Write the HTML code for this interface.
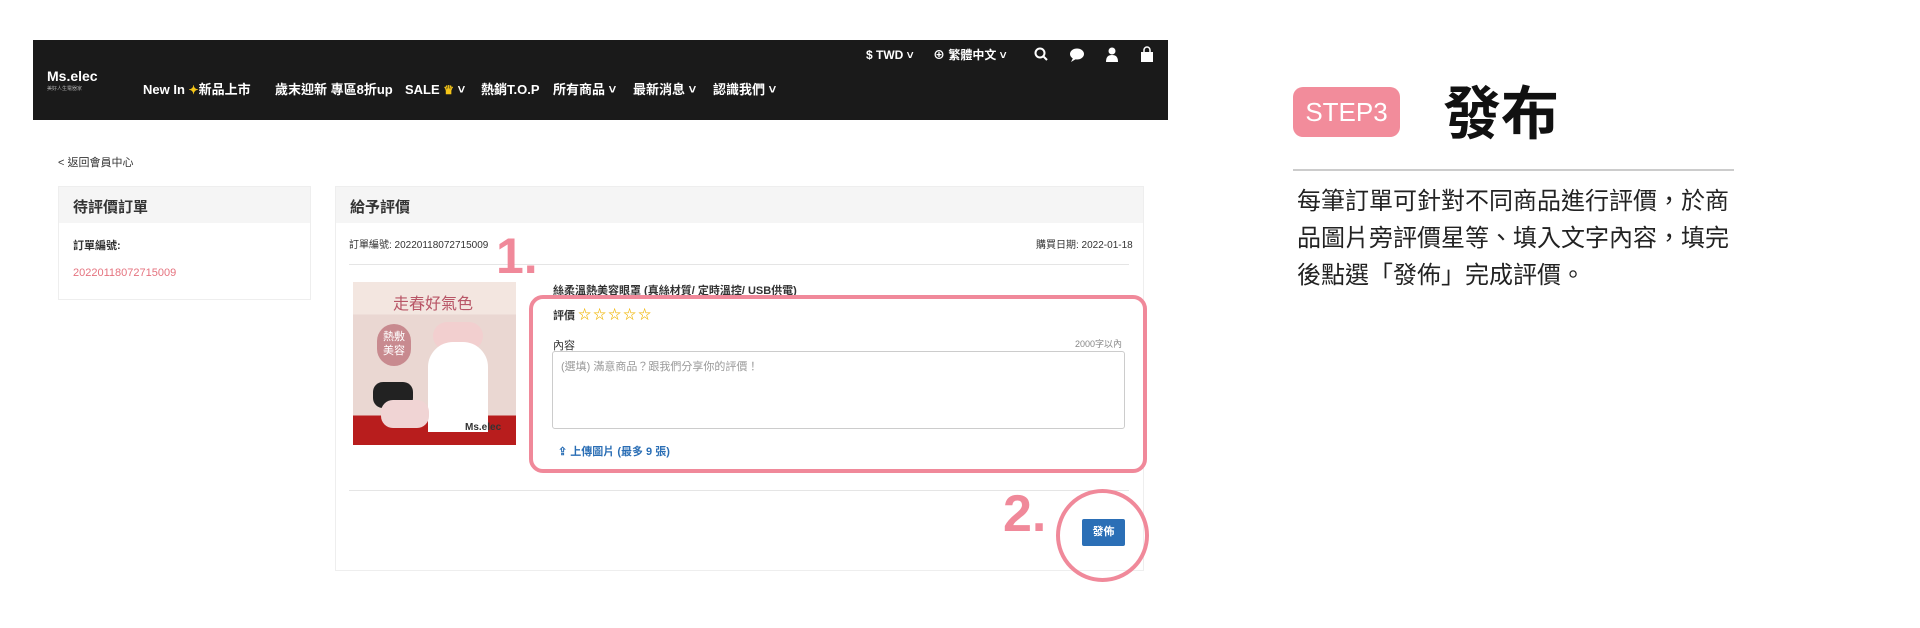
<!DOCTYPE html>
<html><head><meta charset="utf-8"><style>
*{margin:0;padding:0;box-sizing:border-box}
body{width:1920px;height:628px;background:#fff;position:relative;overflow:hidden;font-family:"Liberation Sans","Noto Sans CJK TC",sans-serif;color:#333}
.a{position:absolute;white-space:nowrap}
.nav{left:33px;top:40px;width:1135px;height:80px;background:#1a1a1a}
.w{color:#fff;font-size:13px;font-weight:bold;line-height:16px}
.w span{display:inline-block;line-height:16px;font-size:12px}
.card{border:1px solid #eee;background:#fff}
.hd{background:#f5f5f5;height:36px;font-size:15px;font-weight:bold;padding:9px 14px;color:#333}
.pk{color:#f0899a}
</style></head><body>
<div class="a nav"></div>
<div class="a w" style="left:47px;top:68px;font-size:14px">Ms.elec</div>
<div class="a" style="left:47px;top:85px;font-size:5px;color:#aaa">美好人生電器家</div>
<div class="a w" style="left:143px;top:82px">New In <span style="color:#f5c518">✦</span>新品上市</div>
<div class="a w" style="left:275px;top:82px">歲末迎新 專區8折up</div>
<div class="a w" style="left:405px;top:82px">SALE <span style="color:#f5c518">♛</span> ˅</div>
<div class="a w" style="left:481px;top:82px">熱銷T.O.P</div>
<div class="a w" style="left:553px;top:82px">所有商品 ˅</div>
<div class="a w" style="left:633px;top:82px">最新消息 ˅</div>
<div class="a w" style="left:713px;top:82px">認識我們 ˅</div>
<div class="a w" style="left:866px;top:47px;font-size:12px">$ TWD ˅</div>
<div class="a w" style="left:933px;top:47px;font-size:12px">⊕ 繁體中文 ˅</div>
<svg class="a" style="left:1033px;top:46px" width="130" height="18" viewBox="0 0 130 18" fill="#fff">
<circle cx="7" cy="7" r="4.5" fill="none" stroke="#fff" stroke-width="2"/><path d="M10 10l4 4" stroke="#fff" stroke-width="2"/>
<ellipse cx="44" cy="8" rx="7" ry="5.5"/><path d="M40 12l-2 4 5-3z"/>
<circle cx="79" cy="5" r="3.5"/><path d="M73 16c0-5 2-7 6-7s6 2 6 7z"/>
<path d="M108 6h12v10h-12z"/><path d="M111 6v-2a3 3 0 0 1 6 0v2" fill="none" stroke="#fff" stroke-width="1.5"/>
</svg>

<div class="a" style="left:58px;top:154px;font-size:11px">&lt; 返回會員中心</div>

<div class="a card" style="left:58px;top:186px;width:253px;height:114px"><div class="hd">待評價訂單</div>
<div style="padding:14px 14px;font-size:11px;font-weight:bold">訂單編號:</div>
<div style="padding:0 14px;font-size:11px;color:#e5737f">20220118072715009</div></div>

<div class="a card" style="left:335px;top:186px;width:809px;height:385px"><div class="hd">給予評價</div></div>
<div class="a" style="left:349px;top:236px;font-size:10px">訂單編號: 20220118072715009</div>
<div class="a" style="left:1036px;top:236px;font-size:10px">購買日期: 2022-01-18</div>
<div class="a" style="left:349px;top:264px;width:780px;height:1px;background:#e5e5e5"></div>
<div class="a" style="left:349px;top:490px;width:780px;height:1px;background:#e5e5e5"></div>

<div class="a" style="left:353px;top:282px;width:163px;height:163px;background:linear-gradient(#f3e6e0 0 20%,#ead7d2 20% 82%,#b81d1d 82%)">
<div style="position:absolute;left:40px;top:8px;font-size:16px;color:#b85566">走春好氣色</div>
<div style="position:absolute;left:24px;top:42px;width:34px;height:42px;border-radius:17px;background:#c88a8f;color:#fff;font-size:11px;text-align:center;padding-top:6px;line-height:14px">熱敷<br>美容</div>
<div style="position:absolute;left:80px;top:40px;width:50px;height:28px;border-radius:14px;background:#f2cfcf"></div>
<div style="position:absolute;left:75px;top:60px;width:60px;height:90px;border-radius:25px 25px 0 0;background:#fff"></div>
<div style="position:absolute;left:20px;top:100px;width:40px;height:26px;border-radius:10px;background:#222"></div>
<div style="position:absolute;left:28px;top:118px;width:48px;height:28px;border-radius:12px;background:#f0d4d4"></div>
<div style="position:absolute;left:112px;top:140px;font-size:10px;color:#333;font-weight:bold">Ms.elec</div></div>

<div class="a" style="left:553px;top:282px;font-size:11px;font-weight:bold">絲柔溫熱美容眼罩 (真絲材質/ 定時溫控/ USB供電)</div>
<div class="a" style="left:529px;top:295px;width:618px;height:178px;border:4px solid #f0899a;border-radius:14px"></div>
<div class="a" style="left:553px;top:307px;font-size:11px;font-weight:bold;line-height:16px">評價 <span style="color:#f0b400;font-size:13px;letter-spacing:2px">☆☆☆☆☆</span></div>
<div class="a" style="left:553px;top:337px;font-size:11px">內容</div>
<div class="a" style="left:1075px;top:337px;font-size:9px;color:#888">2000字以內</div>
<div class="a" style="left:552px;top:351px;width:573px;height:78px;border:1px solid #ccc;border-radius:3px;padding:6px 8px;font-size:11px;color:#999">(選填) 滿意商品？跟我們分享你的評價！</div>
<div class="a" style="left:558px;top:443px;font-size:11px;color:#2a6eb5;font-weight:bold">⇪ 上傳圖片 (最多 9 張)</div>

<div class="a pk" style="left:496px;top:228px;font-size:50px;line-height:56px;font-weight:bold">1.</div>
<div class="a pk" style="left:1003px;top:486px;font-size:52px;line-height:56px;font-weight:bold">2.</div>
<div class="a" style="left:1082px;top:519px;width:43px;height:27px;background:#2b6fb6;color:#fff;font-size:11px;font-weight:bold;text-align:center;line-height:27px;border-radius:2px">發佈</div>
<div class="a" style="left:1056px;top:489px;width:93px;height:93px;border:4px solid #f0899a;border-radius:50%"></div>

<div class="a" style="left:1293px;top:87px;width:107px;height:50px;background:#f28c9b;border-radius:10px;color:#fff;font-size:26px;text-align:center;line-height:50px">STEP3</div>
<div class="a" style="left:1443px;top:80px;font-size:58px;font-weight:bold;color:#111;line-height:70px">發布</div>
<div class="a" style="left:1293px;top:169px;width:441px;height:2px;background:#ccc"></div>
<div class="a" style="left:1297px;top:183px;font-size:24px;line-height:37px;color:#222;white-space:normal;width:440px">每筆訂單可針對不同商品進行評價，於商品圖片旁評價星等、填入文字內容，填完後點選「發佈」完成評價。</div>
</body></html>
